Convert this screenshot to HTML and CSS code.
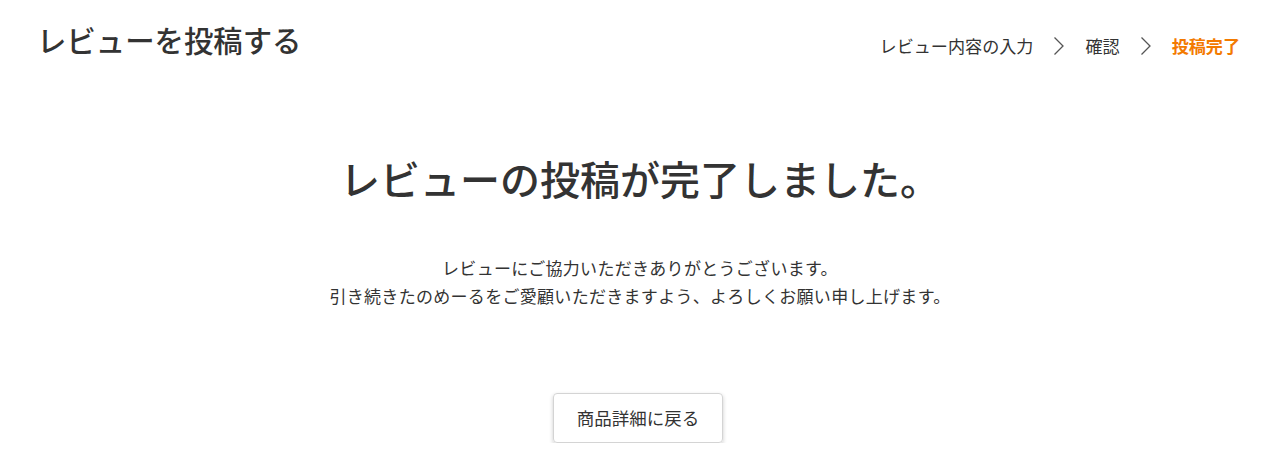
FILE: index.html
```html
<!DOCTYPE html>
<html lang="ja">
<head>
<meta charset="utf-8">
<title>レビューを投稿する</title>
<link rel="stylesheet" href="styles.css">
</head>
<body>
<header class="header">
  <h1 class="page-title">レビューを投稿する</h1>
  <ol class="steps">
    <li class="step">レビュー内容の入力</li>
    <li class="sep"><svg width="12" height="20" viewBox="0 0 12 20"><path d="M1.5 1.5 L10 10 L1.5 18.5" fill="none" stroke="#555" stroke-width="1.3"/></svg></li>
    <li class="step">確認</li>
    <li class="sep"><svg width="12" height="20" viewBox="0 0 12 20"><path d="M1.5 1.5 L10 10 L1.5 18.5" fill="none" stroke="#555" stroke-width="1.3"/></svg></li>
    <li class="step current">投稿完了</li>
  </ol>
</header>
<main class="main">
  <h2 class="done-title">レビューの投稿が完了しました。</h2>
  <p class="message">レビューにご協力いただきありがとうございます。<br>引き続きたのめーるをご愛顧いただきますよう、よろしくお願い申し上げます。</p>
  <div class="actions">
    <a class="back-btn" href="#">商品詳細に戻る</a>
  </div>
</main>
</body>
</html>
```
FILE: styles.css
```css
* { box-sizing: border-box; }
html, body { margin: 0; padding: 0; background: #fff; }
body {
  font-family: "Noto Sans CJK JP", "Noto Sans", sans-serif;
  color: #333;
}
.header {
  display: flex;
  justify-content: space-between;
  align-items: flex-start;
  padding: 18px 40px 0 37px;
}
.page-title {
  margin: 0;
  font-size: 29.4px;
  font-weight: 500;
  line-height: 42px;
}
.steps {
  list-style: none;
  margin: 0;
  padding: 0;
  padding-top: 16px;
  display: flex;
  align-items: center;
  gap: 20px;
  font-size: 17.1px;
  line-height: 24px;
}
.sep { display: flex; align-items: center; }
.step.current { color: #f37a00; font-weight: 700; }
.main {
  display: flex;
  flex-direction: column;
  align-items: center;
  padding-top: 90px;
}
.done-title {
  margin: 0;
  font-size: 40px;
  font-weight: 500;
  line-height: 56px;
}
.message {
  margin: 48px 0 0 0;
  text-align: center;
  font-size: 17px;
  letter-spacing: 0.3px;
  line-height: 28px;
}
.actions { margin-top: 83px; margin-right: 4px; }
.back-btn {
  display: inline-block;
  width: 170px;
  height: 50px;
  line-height: 48px;
  text-align: center;
  border: 1px solid #d4d4d4;
  border-radius: 4px;
  box-shadow: 0 2px 4px rgba(0,0,0,0.2);
  color: #333;
  text-decoration: none;
  font-size: 17.5px;
}
```
